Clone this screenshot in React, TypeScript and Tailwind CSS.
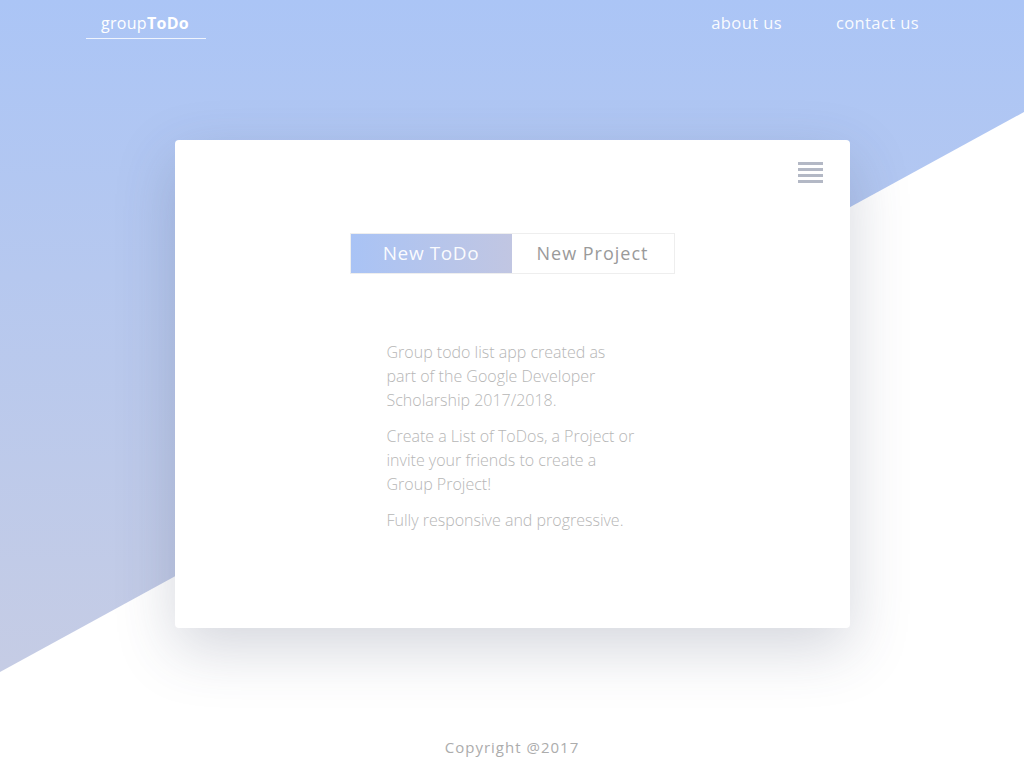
import { useState } from 'react';

const App = () => {
  const [tab, setTab] = useState<'todo' | 'project'>('todo');

  return (
    <div className="relative min-h-screen h-[768px] overflow-hidden bg-white font-['Open_Sans',sans-serif] flex flex-col">
      {/* diagonal background */}
      <div className="absolute inset-0 bg-gradient-to-b from-[#abc5f6] to-[#c9cde2] [clip-path:polygon(0_0,100%_0,100%_112px,0_672px)]" />

      <header className="relative flex items-start justify-between pl-[86px] pr-[105px] pt-[12px] h-[46px]">
        <a className="border-b border-white/80 w-[120px] pb-[4px] pl-[15px] text-[16px] leading-[22px] text-white tracking-[0.3px]">
          group<span className="font-bold">ToDo</span>
        </a>
        <nav className="flex gap-[54px] text-[16.5px] leading-[22px] text-white/95 tracking-[0.4px]">
          <a>about us</a>
          <a>contact us</a>
        </nav>
      </header>

      <main className="relative flex justify-center pt-[94px]">
        <div className="w-[675px] h-[488px] bg-white rounded-[4px] shadow-[0_20px_60px_rgba(60,70,100,0.22)] flex flex-col">
          <div className="flex justify-end pt-[22px] pr-[27px]">
            <div className="flex flex-col gap-[3px] w-[25px]">
              <span className="h-[3px] bg-[#b3b8c5]" />
              <span className="h-[3px] bg-[#b3b8c5]" />
              <span className="h-[3px] bg-[#b3b8c5]" />
              <span className="h-[3px] bg-[#b3b8c5]" />
            </div>
          </div>

          <div className="flex justify-center mt-[50px]">
            <div className="flex border border-[#eeeeee] w-[325px] h-[41px]">
              <button
                onClick={() => setTab('todo')}
                className="w-[161px] bg-gradient-to-r from-[#a9c3f5] to-[#c1c6e2] text-white/95 text-[19px] tracking-[0.6px]"
              >
                New ToDo
              </button>
              <button
                onClick={() => setTab('project')}
                className="flex-1 text-[#9a9a9a] text-[18px] tracking-[1px]"
              >
                New Project
              </button>
            </div>
          </div>

          <div className="mt-[66px] ml-[212px] w-[250px] text-[16px] font-light leading-[24px] text-[#b6b6b6] flex flex-col gap-[12px]">
            {tab === 'todo' ? (
              <>
                <p>Group todo list app created as part of the Google Developer Scholarship 2017/2018.</p>
                <p>Create a List of ToDos, a Project or invite your friends to create a Group Project!</p>
                <p>Fully responsive and progressive.</p>
              </>
            ) : (
              <p>Create a Project and invite your friends.</p>
            )}
          </div>
        </div>
      </main>

      <footer className="relative mt-auto pb-[10px] text-center text-[15px] text-[#acacac] tracking-[1px]">
        Copyright @2017
      </footer>
    </div>
  );
};

export default App;
